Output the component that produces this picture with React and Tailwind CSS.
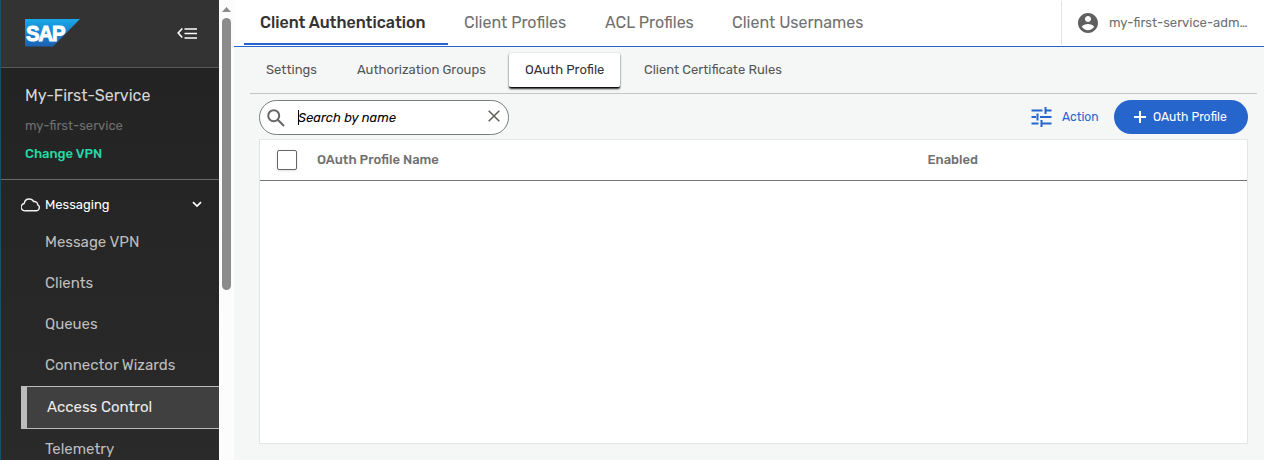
import React from "react";

const navBefore = ["Message VPN", "Clients", "Queues", "Connector Wizards"];

function SapLogo() {
  return (
    <svg width="55" height="28" viewBox="0 0 55 28" className="block">
      <defs>
        <linearGradient id="sap" x1="0" y1="0" x2="0" y2="1">
          <stop offset="0" stopColor="#1aa7e8" />
          <stop offset="1" stopColor="#1c61b4" />
        </linearGradient>
      </defs>
      <path d="M0 0H55L28 27.5H0Z" fill="url(#sap)" />
      <text x="1" y="21.5" textLength="38.5" lengthAdjust="spacingAndGlyphs" fill="#fff" stroke="#fff" strokeWidth="1" letterSpacing="-1.2" fontFamily="Liberation Sans, Arial, sans-serif" fontWeight="700" fontSize="22.5">SAP</text>
    </svg>
  );
}

function Sidebar() {
  return (
    <aside className="flex h-full w-[219px] flex-col border-l border-[#15506f] bg-gradient-to-b from-[#222222] to-[#2a2a2a]">
      <div className="flex h-[68px] shrink-0 justify-between border-b border-[#575757] bg-[#333333] pl-6 pr-[22px] pt-[19px]">
        <SapLogo />
        <svg width="20" height="12" viewBox="0 0 20 12" className="mt-[9px] block" fill="none" stroke="#fff">
          <path d="M5.3 0.5L1.2 5L5.3 9.5" strokeWidth="1.6" />
          <path d="M7.5 1H20M7.5 5.5H20M7.5 10H20" strokeWidth="1.4" />
        </svg>
      </div>
      <div className="h-[112px] shrink-0 border-b border-[#686868] pl-6 pt-[18px]">
        <div className="h-5 whitespace-nowrap text-[16px] leading-5 text-[#d6d6d6]">My-First-Service</div>
        <div className="mt-[12px] h-4 whitespace-nowrap text-[13px] leading-4 text-[#707070]">my-first-service</div>
        <div className="mt-[12px] h-4 whitespace-nowrap text-[13px] font-medium leading-4 text-[#23d9a5]">Change VPN</div>
      </div>
      <div className="flex h-[42px] shrink-0 items-center pl-5 pr-[17px] pt-[8px]">
        <svg width="19" height="14" viewBox="0 0 19 14" fill="none" stroke="#f2f2f2" strokeWidth="1.4" className="mr-[5px]">
          <path d="M4.5 12.8A3.7 3.7 0 0 1 3.2 5.5C3.6 2.8 5.7 1 8.2 1C10.2 1 11.8 1.9 12.7 3.6C15 3.3 16.6 4.7 16.7 6.8C18 7.5 18.6 8.7 18.3 10C18 11.8 16.7 12.8 15.1 12.8Z" />
        </svg>
        <span className="text-[13px] text-white">Messaging</span>
        <svg width="10" height="7" viewBox="0 0 10 7" className="-mt-0.5 ml-auto" fill="none" stroke="#fff" strokeWidth="1.7">
          <path d="M1 1.2L5 5L9 1.2" />
        </svg>
      </div>
      <nav className="flex flex-col text-[15px] text-[#bdbdbd]">
        {navBefore.map((label) => (
          <div key={label} className="flex h-[41px] items-center pl-11">{label}</div>
        ))}
        <div className="ml-5 flex h-[43px] items-center border-y border-l-[6px] border-[#bcbcbc] bg-[#404040] pl-5 text-[#ececec]">Access Control</div>
        <div className="flex h-[41px] items-center pl-11">Telemetry</div>
      </nav>
    </aside>
  );
}

function Scrollbar() {
  return (
    <div className="flex h-full w-[15px] shrink-0 flex-col items-center bg-[#fcfcfc] pt-[7px]">
      <svg width="9" height="5" viewBox="0 0 9 5" className="mb-[6px] shrink-0"><path d="M4.5 0L9 5H0Z" fill="#8b8b8b" /></svg>
      <div className="h-[272px] w-[9px] shrink-0 rounded-full bg-[#8b8b8b]" />
    </div>
  );
}

function TopTabs() {
  return (
    <header className="flex h-[47px] shrink-0 whitespace-nowrap border-b border-[#2666cc] bg-white pl-[10px] text-[16px] text-[#707070]">
      <div className="flex h-[45px] w-[204px] items-center border-b-2 border-[#2666cc] pl-4 pt-0.5 font-medium text-[#333]">Client Authentication</div>
      <div className="flex h-[45px] w-[141px] items-center pl-4">Client Profiles</div>
      <div className="flex h-[45px] w-[127px] items-center pl-4">ACL Profiles</div>
      <div className="flex h-[45px] items-center pl-4">Client Usernames</div>
      <div className="ml-auto mt-px flex h-11 w-[203px] items-center border-l border-[#e3e3e3] pl-[14px] text-[13px]">
        <svg width="24" height="24" viewBox="0 0 24 24" fill="#606060" className="shrink-0">
          <path d="M12 2C6.48 2 2 6.48 2 12s4.48 10 10 10 10-4.48 10-10S17.52 2 12 2zm0 3c1.66 0 3 1.34 3 3s-1.34 3-3 3-3-1.34-3-3 1.34-3 3-3zm0 14.2c-2.5 0-4.71-1.28-6-3.22.03-1.99 4-3.08 6-3.08 1.99 0 5.97 1.09 6 3.08-1.29 1.94-3.5 3.22-6 3.22z" />
        </svg>
        <span className="ml-[9px]">my-first-service-adm…</span>
      </div>
    </header>
  );
}

function SubTabs() {
  return (
    <div className="ml-4 mr-[7px] flex h-[47px] shrink-0 items-start whitespace-nowrap border-b border-[#c4c4c4] pt-[6px] text-[13px] text-[#555]">
      <div className="flex h-[34px] w-[91px] items-center pl-4">Settings</div>
      <div className="flex h-[34px] w-[168px] items-center pl-4">Authorization Groups</div>
      <div className="flex h-[35px] w-[111px] items-center rounded-[2px] border-b border-[#111] bg-white pl-4 text-[#333] shadow-[0_1px_2px_0_rgba(0,0,0,0.85)]">OAuth Profile</div>
      <div className="flex h-[34px] items-center pl-6">Client Certificate Rules</div>
    </div>
  );
}

function Toolbar() {
  return (
    <div className="ml-[25px] mr-4 mt-[5px] flex h-9 shrink-0 items-center">
      <div className="flex h-[35px] w-[250px] items-center rounded-full border border-[#777d7a] bg-white pl-[7px] pr-[8px]">
        <svg width="18" height="18" viewBox="0 0 18 18" fill="none" stroke="#666" strokeWidth="2" className="mt-px shrink-0">
          <circle cx="6.7" cy="6.7" r="5.5" /><path d="M10.8 10.8L17 17" />
        </svg>
        <span className="ml-[13px] h-[15px] w-px bg-black" />
        <span className="-ml-px whitespace-nowrap pt-px text-[13px] italic text-black">Search by name</span>
        <svg width="12" height="12" viewBox="0 0 12 12" fill="none" stroke="#5c5c55" strokeWidth="1.5" className="-mt-[2px] ml-auto"><path d="M0.7 0.7L11.3 11.3M11.3 0.7L0.7 11.3" /></svg>
      </div>
      <svg width="21" height="20" viewBox="0 0 21 20" fill="none" stroke="#2666cc" strokeWidth="2" className="ml-auto">
        <path d="M0.5 3.5H11.5M13.5 3.5H20.5M14.5 0V7M0.5 10H5M9 10H20.5M6.5 6.5V13.5M0.5 16.5H7.5M9.5 16.5H20.5M10.5 13V20" />
      </svg>
      <span className="ml-[10px] w-[52px] origin-left scale-x-[0.93] text-[13px] text-[#2666cc]">Action</span>
      <button className="-mt-px flex h-[34px] w-[134px] items-center whitespace-nowrap rounded-full bg-[#2666cc] pl-[20px] text-[13px] text-white">
        <svg width="12" height="12" viewBox="0 0 12 12" className="mr-[7px] shrink-0" stroke="#fff" strokeWidth="2"><path d="M6 0V12M0 6H12" /></svg>
        <span className="origin-left scale-x-[0.93]">OAuth Profile</span>
      </button>
    </div>
  );
}

export default function App() {
  return (
    <div className="flex h-[460px] w-[1264px] overflow-hidden bg-[#f5f7f7] font-['Rubik',Roboto,sans-serif]">
      <Sidebar />
      <Scrollbar />
      <main className="flex min-w-0 flex-1 flex-col">
        <TopTabs />
        <SubTabs />
        <Toolbar />
        <section className="ml-[25px] mr-4 mt-[4px] h-[305px] shrink-0 border border-[#e3e6e6] bg-white">
          <div className="flex h-[41px] items-center border-b border-[#777] pl-[17px] text-[13px] font-medium text-[#707070]">
            <span className="h-5 w-5 rounded-[2px] border border-[#666] bg-white shadow-sm" />
            <span className="ml-5 w-[610.5px]">OAuth Profile Name</span>
            <span>Enabled</span>
          </div>
        </section>
      </main>
    </div>
  );
}
